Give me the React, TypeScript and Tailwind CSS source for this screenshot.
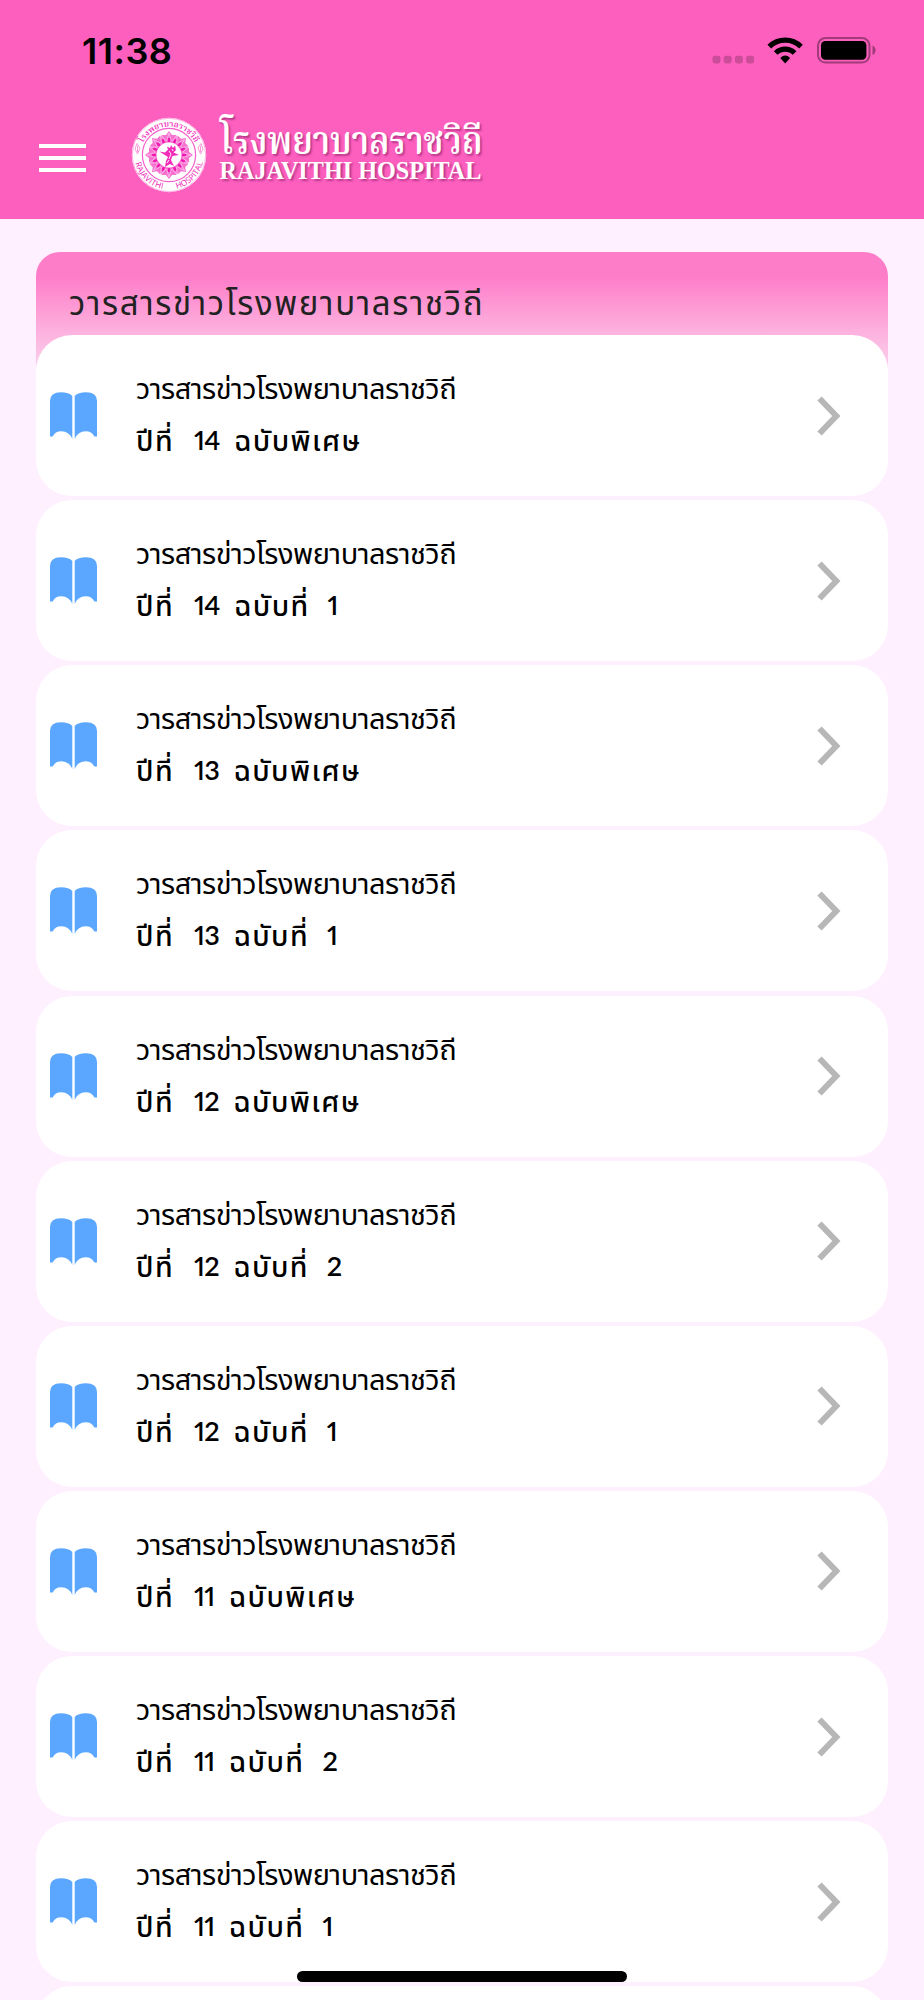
import React from "react";

interface Issue {
    year: string;
    label: string;
    no?: string;
}

const HOSPITAL = "โรงพยาบาลราชวิถี";
const NEWSLETTER = "วารสารข่าวโรงพยาบาลราชวิถี";

const issues: Issue[] = [
    { year: "14", label: "ฉบับพิเศษ" },
    { year: "14", label: "ฉบับที่", no: "1" },
    { year: "13", label: "ฉบับพิเศษ" },
    { year: "13", label: "ฉบับที่", no: "1" },
    { year: "12", label: "ฉบับพิเศษ" },
    { year: "12", label: "ฉบับที่", no: "2" },
    { year: "12", label: "ฉบับที่", no: "1" },
    { year: "11", label: "ฉบับพิเศษ" },
    { year: "11", label: "ฉบับที่", no: "2" },
    { year: "11", label: "ฉบับที่", no: "1" },
];

const petals = Array.from({ length: 16 }, (_, i) => i * 22.5);
const points = Array.from({ length: 8 }, (_, i) => i * 45);

function StatusBar() {
    return (
        <div className="flex h-[100px] items-start justify-between pt-[30px] pr-[48px] pl-[82px]">
            <span className="font-['Inter'] text-[36px] leading-[42px] font-semibold tracking-[0.5px] text-black">11:38</span>
            <svg width="164" height="28" viewBox="0 0 164 28" className="mt-[6px]">
                <g fill="#cb4c98">
                    <rect x="0.5" y="19.8" width="8" height="7.6" rx="2.4" />
                    <rect x="11.7" y="19.8" width="8" height="7.6" rx="2.4" />
                    <rect x="22.9" y="19.8" width="8" height="7.6" rx="2.4" />
                    <rect x="34.1" y="19.8" width="8" height="7.6" rx="2.4" />
                </g>
                <g fill="none" stroke="#000" strokeWidth="5.2">
                    <path d="M57.3 10.6A22.5 22.5 0 0 1 89 10.6" />
                    <path d="M63.7 17A13.4 13.4 0 0 1 82.6 17" />
                </g>
                <path d="M68.3 21.9Q73.2 17.2 78.1 21.9L73.2 27.4Z" fill="#000" />
                <rect x="106" y="2" width="51.5" height="24.6" rx="7.5" fill="none" stroke="#a03c78" strokeWidth="2" />
                <rect x="109" y="5" width="45.4" height="18.8" rx="4.4" fill="#000" />
                <path d="M160.5 9.6Q163.6 11 163.6 14.3Q163.6 17.6 160.5 19Z" fill="#a03c78" />
            </svg>
        </div>
    );
}

function Seal() {
    return (
        <svg width="76" height="76" viewBox="-38 -38 76 76">
            <defs>
                <path id="arc-top" d="M-28.5 0A28.5 28.5 0 0 1 28.5 0" />
                <path id="arc-bottom" d="M-34.6 0A34.6 34.6 0 0 0 34.6 0" />
            </defs>
            <circle r="37.2" fill="#fff" />
            <circle r="36.6" fill="none" stroke="#fb9fdc" strokeWidth="0.8" />
            <circle r="26.6" fill="none" stroke="#f45fcb" strokeWidth="1.2" />
            {points.map((deg) => (
                <path key={deg} d="M-9 -17L-7 -20L-3 -20L0 -24L3 -20L7 -20L9 -17L5 -11.5H-5Z" fill="#f772cf" transform={`rotate(${deg})`} />
            ))}
            {petals.map((deg) => (
                <g key={deg} transform={`rotate(${deg})`}>
                    <path d="M-2.4 -14L0 -22L2.4 -14" fill="none" stroke="#ffd9f3" strokeWidth="0.6" />
                    <ellipse cy="-15" rx="1.3" ry="2.3" fill="#f016b2" />
                </g>
            ))}
            <circle r="12.4" fill="#fff" />
            <path
                d="M-9.5 -3.5L-4 -2.5L-1 -5.5L-2 -8.5L1 -7L2 -10L4 -7L6 -9.5L7 -5L4.5 -2.5L10 0L3.5 1L2 5L5 11L1 9L-4 12L-3 6L-1 2L-5 -0.5Z"
                fill="#f22bb9"
            />
            <path d="M0 -4L2 -1L0 4M3 -6L4 -4M-2 8L0 5" fill="none" stroke="#fff" strokeWidth="0.9" />
            <g fill="none" stroke="#f78bd6" strokeWidth="0.9">
                <path d="M-32 -11.5L-29 -7L-31.5 -1L-34 -6Z M-31.5 -9V-3" />
                <path d="M32 -11.5L29 -7L31.5 -1L34 -6Z M31.5 -9V-3" />
            </g>
            <text fill="#f22bb9" fontSize="8.2" fontWeight="600" fontFamily="Noto Serif Thai, serif">
                <textPath href="#arc-top" startOffset="50%" textAnchor="middle">{HOSPITAL}</textPath>
            </text>
            <g fill="#ee22b4" fontSize="8.2" fontWeight="500" fontFamily="Open Sans, sans-serif">
                <text>
                    <textPath href="#arc-bottom" startOffset="8" textLength="40">RAJAVITHI</textPath>
                </text>
                <text>
                    <textPath href="#arc-bottom" startOffset="62" textLength="39">HOSPITAL</textPath>
                </text>
            </g>
        </svg>
    );
}

function Header() {
    return (
        <header className="h-[219px] shrink-0 bg-[#fd5fbe]">
            <StatusBar />
            <div className="flex items-start pl-[39px]">
                <div className="mt-[43.5px] flex w-[47px] flex-col gap-[8px]">
                    <div className="h-1 bg-white" />
                    <div className="h-1 bg-white" />
                    <div className="h-1 bg-white" />
                </div>
                <div className="mt-[17px] ml-[44.5px]">
                    <Seal />
                </div>
                <div className="mt-[19px] ml-[13px] flex flex-col text-white [text-shadow:2px_2px_2px_rgba(120,20,90,0.5)]">
                    <span className="h-[39px] origin-left scale-x-[0.865] font-['Noto_Serif_Thai',serif] text-[39px] leading-[50px] font-semibold whitespace-nowrap">
                        {HOSPITAL}
                    </span>
                    <span className="font-['Liberation_Serif'] text-[24.2px] leading-[26px] font-bold whitespace-nowrap">RAJAVITHI HOSPITAL</span>
                </div>
            </div>
        </header>
    );
}

function BookIcon() {
    return (
        <svg width="47" height="48" viewBox="0 0 47 48" fill="#5ba7ff" className="mt-px shrink-0">
            <path d="M0 9Q0 0.3 11 0.3Q19 0.3 22.3 4V47Q19 39.3 11.5 39.3Q5 39.3 2.7 44.5H0Z" />
            <path d="M47 9Q47 0.3 36 0.3Q28 0.3 24.7 4V47Q28 39.3 35.5 39.3Q42 39.3 44.3 44.5H47Z" />
        </svg>
    );
}

function IssueCard({ issue }: { issue: Issue }) {
    return (
        <div className="flex h-[161px] shrink-0 items-center rounded-[36px] bg-white pr-[47px] pl-[14px]">
            <BookIcon />
            <div className="mt-[-3px] ml-[39px] flex flex-1 flex-col whitespace-nowrap text-black">
                <span className="text-[29px] leading-[52px] tracking-[-0.5px]">{NEWSLETTER}</span>
                <span className="flex text-[28.5px] leading-[52px] font-medium tracking-[1.4px] proportional-nums">
                    <span>ปีที่</span>
                    <span className="ml-[20px] text-[27px] font-semibold tracking-[-0.5px]">{issue.year}</span>
                    <span className="ml-[14px]">{issue.label}</span>
                    {issue.no && <span className="ml-[18px] text-[27px] font-semibold">{issue.no}</span>}
                </span>
            </div>
            <svg width="24" height="40" viewBox="0 0 24 40" fill="none">
                <path d="M2.5 2.5L19.3 20L2.5 37.5" stroke="#b7b7b7" strokeWidth="6" />
            </svg>
        </div>
    );
}

export default function App() {
    return (
        <div className="relative flex h-[2000px] w-[924px] flex-col overflow-hidden bg-[#fff0ff] font-['Lato','Noto_Sans_Thai',sans-serif]">
            <Header />
            <main className="px-[36px] pt-[33px]">
                <div className="h-[115px] rounded-t-[24px] bg-linear-to-b from-[#fd7dc9] from-22% to-[#f9d0ec] pt-[28px] pl-[33px]">
                    <h1 className="text-[33px] leading-[44px] tracking-[1.65px] whitespace-nowrap text-[#222]">{NEWSLETTER}</h1>
                </div>
                <div className="-mt-[32px] flex flex-col gap-[4.15px]">
                    {issues.map((issue, i) => (
                        <IssueCard key={i} issue={issue} />
                    ))}
                    <div className="h-[161px] rounded-[36px] bg-white" />
                </div>
            </main>
            <div className="absolute bottom-[18px] left-[297px] h-[11px] w-[330px] rounded-full bg-black" />
        </div>
    );
}
